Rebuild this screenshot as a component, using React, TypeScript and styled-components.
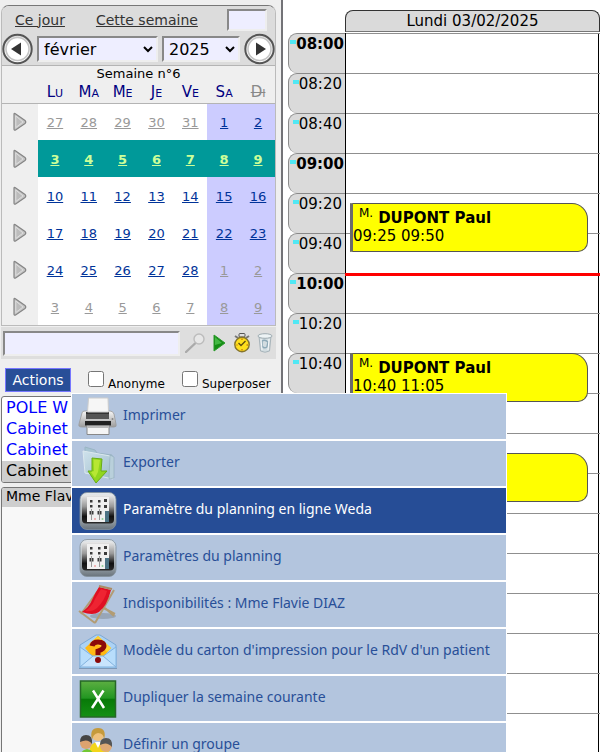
import React from "react";
import styled, { createGlobalStyle } from "styled-components";

const GlobalStyle = createGlobalStyle`
  * { box-sizing: border-box; }
  body { margin: 0; background: #fff; color: #000; font-family: "DejaVu Sans", Verdana, sans-serif; font-size: 15px; }
`;

const Page = styled.div`
  display: flex;
  height: 100vh;
  overflow: hidden;
`;

const Sidebar = styled.aside`
  flex: 0 0 283px;
  min-width: 0;
  min-height: 100%;
  padding: 5px 5px 0 1px;
  background: #efefef;
  border-right: 2px solid #737377;
`;

const CalendarBox = styled.section`
  border: 1px solid #bbb;
  border-top-color: #777;
  border-radius: 8px 8px 0 0;
  overflow: hidden;
`;

const CalendarHead = styled.header`
  background: #dcdcdc;
  border-bottom: 1px solid #b4b4b4;
`;

const QuickLinks = styled.div`
  display: flex;
  align-items: center;
  height: 27px;
  padding: 0 8px 0 13px;
`;

const QuickLink = styled.a`
  color: #333;
  font-size: 14px;
  white-space: nowrap;
  & + & { margin-left: 31px; }
`;

const field = `
  background: #eeeeff;
  border: 2px solid #eee;
  border-top-color: #888;
  border-left-color: #888;
  border-radius: 0;
  color: #000;
  font-family: inherit;
`;

const ShortInput = styled.input`
  ${field}
  width: 40px;
  height: 22px;
  margin-left: auto;
`;

const MonthBar = styled.div`
  display: flex;
  align-items: center;
  justify-content: space-between;
  height: 32px;
`;

const Picker = styled.select<{ $width: number }>`
  ${field}
  width: ${(p) => p.$width}px;
  height: 26px;
  padding: 0 3px 0 1px;
  font-size: 16px;
`;

const IconButton = styled.button`
  display: flex;
  align-items: center;
  justify-content: center;
  padding: 0;
  border: 0;
  background: none;
`;

const WeekTable = styled.table`
  width: 100%;
  table-layout: fixed;
  border-collapse: collapse;
  caption {
    height: 16px;
    font-size: 13px;
    line-height: 16px;
  }
`;

const DayName = styled.th<{ $off?: boolean }>`
  width: ${(p) => (p.$off === undefined ? "36px" : "auto")};
  height: 21px;
  padding: 0;
  border-bottom: 1px solid #b4b4b4;
  color: ${(p) => (p.$off ? "#888" : "#000080")};
  font-size: 15px;
  font-weight: normal;
  font-variant: small-caps;
  text-decoration: ${(p) => (p.$off ? "line-through" : "none")};
`;

const WeekCell = styled.td`
  height: 37px;
  padding: 0;
  background: #efefef;
  button { width: 100%; }
`;

type Tone = "other" | "current" | "selected";
const toneColor: Record<Tone, string> = { other: "#999", current: "#003399", selected: "#ccff99" };

const DayCell = styled.td<{ $weekend: boolean; $tone: Tone }>`
  padding: 0;
  text-align: center;
  background: ${(p) => (p.$tone === "selected" ? "#009999" : p.$weekend ? "#ccccff" : "#fff")};
  a {
    color: ${(p) => toneColor[p.$tone]};
    font-size: 13px;
    font-weight: ${(p) => (p.$tone === "selected" ? "bold" : "normal")};
  }
`;

const SearchBar = styled.div`
  display: flex;
  align-items: center;
  gap: 5px;
  height: 32px;
  margin-top: 1px;
  padding: 0 2px;
  background: #dedede;
`;

const SearchInput = styled.input`
  ${field}
  flex: 1;
  width: 0;
  min-width: 0;
  height: 25px;
`;

const OptionsBar = styled.div`
  display: flex;
  align-items: center;
  height: 24px;
  margin: 9px 0 4px 4px;
`;

const ActionsButton = styled.button`
  flex: none;
  width: 66px;
  height: 24px;
  padding: 0;
  border: 1px solid #7777ff;
  background: #284f98;
  color: #fff;
  font-family: inherit;
  font-size: 14px;
`;

const CheckLabel = styled.label`
  display: flex;
  align-items: flex-end;
  gap: 4px;
  margin: 2px 0 0 13px;
  font-size: 12px;
  line-height: 14px;
  white-space: nowrap;
  input {
    width: 16px;
    height: 16px;
    margin: 0 0 4px 4px;
  }
`;

const ListBox = styled.select<{ $tall?: boolean }>`
  display: block;
  width: 100%;
  height: ${(p) => (p.$tall ? "280px" : "87px")};
  margin-bottom: 4px;
  padding: ${(p) => (p.$tall ? 0 : 1)}px 0 0;
  border: 1px solid #767676;
  border-radius: 3px;
  background: ${(p) => (p.$tall ? "#f8f8f8" : "#fff")};
  font-family: inherit;
  font-size: ${(p) => (p.$tall ? 14 : 16)}px;
  overflow: hidden;
`;

const ListItem = styled.option<{ $active?: boolean; $short?: boolean }>`
  height: ${(p) => (p.$short ? 19 : 21)}px;
  min-height: 0;
  padding: 0 4px;
  line-height: ${(p) => (p.$short ? 19 : 21)}px;
  color: ${(p) => (p.$active ? "#000" : "#0000ff")};
  background: ${(p) => (p.$active ? "#cecece" : "transparent")};
`;

const Planning = styled.main`
  flex: 1;
  min-width: 0;
  padding: 10px 0 0 5px;
`;

const PlanningHead = styled.div`
  height: 22px;
  margin: 0 0 1px 57px;
  border: 1px solid #333;
  border-bottom-color: #777;
  border-radius: 8px 8px 0 0;
  background: #dadada;
  line-height: 20px;
  text-align: center;
`;

const PlanningBody = styled.div`
  display: flex;
`;

const Times = styled.div`
  flex: 0 0 57px;
`;

const TimeCell = styled.div<{ $full: boolean }>`
  display: flex;
  justify-content: flex-end;
  height: 40px;
  padding-right: ${(p) => (p.$full ? 1 : 3)}px;
  border: solid #8a8a8a;
  border-width: 1px 0 0 1px;
  border-radius: 9px 0 0 9px;
  background: #dadada;
  font-weight: ${(p) => (p.$full ? "bold" : "normal")};
  line-height: 20px;
  &::before {
    content: "";
    width: 6px;
    height: 4px;
    margin-top: 6px;
    background: #50e8f4;
  }
`;

const DayColumn = styled.div`
  position: relative;
  flex: 1;
  margin-right: 1px;
  border: solid #000;
  border-width: 0 1px;
`;

const Slot = styled.div`
  height: 40px;
  margin-right: -2px;
  border-top: 1px solid #8f8f8f;
`;

const NowLine = styled.div`
  position: absolute;
  top: 240px;
  left: -1px;
  right: -2px;
  height: 3px;
  background: #f00;
`;

const Appointment = styled.article<{ $start: number }>`
  position: absolute;
  top: ${(p) => p.$start * 2}px;
  left: 4px;
  right: 10px;
  height: 49px;
  border: 1px solid #555;
  border-left: 3px solid #6b6b6b;
  border-radius: 0 16px 10px 0;
  background: #ffff00;
  line-height: 18px;
`;

const Patient = styled.div`
  display: flex;
  gap: 5px;
  padding: 5px 0 0 6px;
  small { font-size: 12px; line-height: 8px; }
`;

const Menu = styled.nav`
  position: absolute;
  top: 393px;
  left: 71px;
  min-width: 436px;
  background: #fff;
  padding: 1px;
  display: flex;
  flex-direction: column;
  gap: 2px;
`;

const MenuItem = styled.button<{ $active?: boolean }>`
  display: flex;
  align-items: center;
  gap: 5px;
  height: 45px;
  padding: 0 6px;
  border: 0;
  background: ${(p) => (p.$active ? "#264d96" : "#b3c5de")};
  color: ${(p) => (p.$active ? "#fff" : "#284f98")};
  font-family: "Noto Sans", Verdana, sans-serif;
  font-size: 14px;
  line-height: 18px;
  text-align: left;
  white-space: nowrap;
  svg { flex: none; }
  span { padding-bottom: 4px; }
`;

const RoundArrow = ({ flip }: { flip?: boolean }) => (
  <svg width="31" height="32" viewBox="0 0 31 32">
    <defs>
      <linearGradient id="ring" x2="0" y2="1"><stop stopColor="#ddd" /><stop offset="1" stopColor="#fff" /></linearGradient>
    </defs>
    <circle cx="15.500" cy="16" r="14.200" fill="url(#ring)" stroke="#555" strokeWidth="2" />
    <circle cx="15.500" cy="16" r="11.500" fill="#fff" stroke="#c4c4c4" strokeWidth="1.500" />
    <path d={flip ? "M12 9.500L22 16L12 22.500Z" : "M19 9.500L9 16L19 22.500Z"} fill="#333" />
  </svg>
);

const WeekArrow = () => (
  <svg width="14" height="20" viewBox="0 0 14 20">
    <path d="M2 1.5Q1 1 1 2.5V17Q1 18.7 2.6 18L12 11.5Q13.5 10 12 8.5Z" fill="#c6c6c6" stroke="#858585" strokeWidth="1.2" />
    <path d="M2.8 4V15.5L10 10Z" fill="#bcbcbc" stroke="#dedede" />
  </svg>
);

const Magnifier = () => (
  <svg width="20" height="20" viewBox="0 0 20 20">
    <path d="M1 19L10 10.500" stroke="#aaa" strokeWidth="2.400" strokeLinecap="round" />
    <circle cx="14" cy="6" r="5" fill="#e7e7e7" stroke="#bcbcbc" strokeWidth="1.400" />
  </svg>
);

const Play = () => (
  <svg width="18" height="20" viewBox="0 0 18 20">
    <path d="M4 2L15 10L4 18Z" fill="#148d14" stroke="#2b9a2b" />
    <path d="M5 4L12 10L5 12Z" fill="#44b844" />
  </svg>
);

const Stopwatch = () => (
  <svg width="18" height="20" viewBox="0 0 18 20">
    <rect x="6" y="0.500" width="6" height="3.500" rx="1" fill="#ddd" stroke="#555" />
    <path d="M2 3L5 5M16 3L13 5" stroke="#777" strokeWidth="2" />
    <circle cx="9" cy="11.500" r="7.200" fill="#ffdf1b" stroke="#85742c" strokeWidth="1.400" />
    <path d="M5.500 10L8 12.500L12.500 8" fill="none" stroke="#5b4a10" strokeWidth="1.300" />
    <path d="M9 5.500V7M9 16V17.500M3.500 12H4.500M13.500 12H15" stroke="#b05010" />
  </svg>
);

const Trash = () => (
  <svg width="18" height="20" viewBox="0 0 18 20">
    <path d="M3 3L4.500 18Q9 20.500 13.500 18L15 3Z" fill="#d3dde1" stroke="#a8b4ba" />
    <ellipse cx="9" cy="3" rx="7" ry="2.300" fill="#edf3f5" stroke="#9eabb1" />
    <path d="M6 8Q9 6 12 9L11 14Q8 16 6 13Z" fill="none" stroke="#8eaab8" strokeWidth="1.500" />
    <path d="M5 6L6 17M13 6L12 17" stroke="#f7fafb" />
  </svg>
);

const Printer = () => (
  <svg width="40" height="40" viewBox="0 0 40 40">
    <defs><linearGradient id="prn" x2="0" y2="1"><stop stopColor="#f7f7f7" /><stop offset="1" stopColor="#9c9c9c" /></linearGradient></defs>
    <path d="M4 16Q4 14 7 14H32Q35 14 36 17L38 27Q39 30 36 30H4Q0 30 1 27Z" fill="url(#prn)" stroke="#999" strokeWidth=".8" />
    <path d="M8 15H31V22H8Z" fill="#555" />
    <path d="M8 15H31V17H8Z" fill="#333" />
    <path d="M10.500 1H30L30.500 15H9.500Z" fill="#f6f6f6" stroke="#ccc" />
    <path d="M7 24H33V28.500H7Z" fill="#222" />
    <path d="M9 28.500H31V37.500H9Z" fill="#f5f5f5" stroke="#888" />
    <path d="M9 30H31" stroke="#bbb" strokeWidth="2" />
    <circle cx="34.500" cy="22" r="1" fill="#888" />
  </svg>
);

const ExportFolder = () => (
  <svg width="40" height="40" viewBox="0 0 40 40">
    <defs><linearGradient id="fld" x2="1" y2="1"><stop stopColor="#cfe2ec" /><stop offset="1" stopColor="#9dbccb" /></linearGradient></defs>
    <path d="M7 3L17 6L19 9L34 11V34L7 27Z" fill="#a6c3d2" stroke="#9ab5c4" />
    <path d="M5 7L32 12L35 35L7 29Z" fill="url(#fld)" stroke="#dbe8ee" />
    <path d="M32 11L36 13V34L31 35Z" fill="#b9d0db" stroke="#8faab8" strokeWidth=".6" />
    <path d="M14 14L24 15L23 27L29 27L18 39L10 27L14 27Z" fill="#90d61e" stroke="#68ac15" />
    <path d="M15.500 15.500L22 16L20 28L17 34L13 28L16 27Z" fill="#b7e733" />
  </svg>
);

const Mixer = () => (
  <svg width="40" height="40" viewBox="0 0 40 40">
    <defs>
      <linearGradient id="mixFrame" x2="0" y2="1"><stop stopColor="#e6eaed" /><stop offset=".8" stopColor="#8d979e" /><stop offset="1" stopColor="#69737b" /></linearGradient>
      <linearGradient id="mixFace" x2="0" y2="1"><stop stopColor="#e8e8e8" /><stop offset=".4" stopColor="#999" /><stop offset=".75" stopColor="#111" /><stop offset="1" stopColor="#2a2a2a" /></linearGradient>
    </defs>
    <rect x="2" y="1.500" width="36" height="37" rx="7" fill="url(#mixFrame)" stroke="#84909a" strokeWidth=".8" />
    <rect x="4" y="4" width="32" height="28.500" rx="4" fill="url(#mixFace)" />
    <rect x="9" y="6" width="22" height="25" fill="#f0f0f0" />
    <path d="M27 20H31V31H27Z" fill="#4c7384" />
    <g fill="#3a3a3a">
      <path d="M12 9H14.500V11.500H12ZM12 14H14.500V16.500H12ZM20 9H22.500V11.500H20ZM20 14H22.500V16.500H20ZM26 8H29V11H26ZM26 14H29V17H26Z" />
      <path d="M11.500 20H15.500V23.500H11.500ZM19.500 20H23.500V23.500H19.500Z" />
    </g>
    <path d="M13.500 18V29M21.500 18V29" stroke="#999" />
    <circle cx="17" cy="28" r="1" fill="#f0a0a0" /><circle cx="24.500" cy="28" r="1" fill="#90d098" />
  </svg>
);

const DeckChair = () => (
  <svg width="40" height="40" viewBox="0 0 40 40">
    <ellipse cx="25" cy="31" rx="13" ry="3" fill="#98a6b8" />
    <path d="M22 3L3 29M36 5L17 38M14 17L37 29M27 23L36 31M1 26L17 38" fill="none" stroke="#b29c74" strokeWidth="2" />
    <path d="M21 2L33 5Q29 21 21 27Q15 31 4 27Q11 22 14 15Q17 8 21 2Z" fill="#e00f22" />
    <path d="M23 4L29 6Q27 15 19 23Q14 27 7 26Q14 22 17 14Z" fill="#ee2432" />
    <path d="M21 1L34 4" stroke="#aa8c63" strokeWidth="2" />
  </svg>
);

const Envelope = () => (
  <svg width="40" height="40" viewBox="0 0 40 40">
    <path d="M2 13L18 3H22L38 13V36H2Z" fill="#acd2f4" stroke="#7ca8d5" />
    <path d="M20 4L33 16L20 31L7 16Z" fill="#ffb914" />
    <path d="M20 4L33 16L29 20Q22 11 11 12Z" fill="#ffd332" />
    <path d="M2 15L16 25H24L38 15V36H2Z" fill="#b8ddfb" stroke="#83b3df" />
    <path d="M2 35L15 24H25L38 35Z" fill="#c8e4fd" stroke="#83b3df" />
    <path d="M1 36.500H39" stroke="#7f99b8" />
    <path d="M14 14Q15 10 20 10Q26 10 26 14Q26 17 20 19V23" fill="none" stroke="#8b0909" strokeWidth="5" />
    <circle cx="20" cy="28" r="3" fill="#8b0909" />
  </svg>
);

const Sheet = () => (
  <svg width="40" height="40" viewBox="0 0 40 40">
    <defs><linearGradient id="xls" x2="0" y2="1"><stop stopColor="#5daf42" /><stop offset=".48" stopColor="#219621" /><stop offset=".5" stopColor="#087908" /><stop offset="1" stopColor="#149014" /></linearGradient></defs>
    <rect x="2.500" y="2" width="35" height="36" fill="url(#xls)" stroke="#266727" strokeWidth="1.500" />
    <path d="M15 11.500L26 29M25.500 11.500L14 29" stroke="#fff" strokeWidth="2.500" />
  </svg>
);

const Group = () => (
  <svg width="40" height="40" viewBox="0 0 40 40">
    <path d="M11 27Q12 16 20 16Q30 16 31 27Z" fill="#f3d51a" />
    <path d="M17 16L20 22L23 16Z" fill="#fff" />
    <circle cx="20" cy="9" r="6" fill="#efc17d" /><path d="M14 14Q11 2 20 2Q29 2 26 14Q26 7 20 7Q15 8 14 14Z" fill="#c59a3c" />
    <path d="M1 36Q1 24 9 23Q17 24 18 36Z" fill="#72c832" />
    <circle cx="8" cy="17" r="6" fill="#dda36f" /><path d="M2 16Q2 9 8 9Q15 9 14 18Q10 12 2 16Z" fill="#454545" />
    <path d="M19 37Q19 27 28 26Q37 27 37 37Z" fill="#e6b81d" />
    <circle cx="28" cy="20" r="6" fill="#dfaa76" /><path d="M22 19Q22 12 28 12Q35 12 34 21Q29 15 22 19Z" fill="#555" />
  </svg>
);

const weeks = [
  [27, 28, 29, 30, 31, 1, 2],
  [3, 4, 5, 6, 7, 8, 9],
  [10, 11, 12, 13, 14, 15, 16],
  [17, 18, 19, 20, 21, 22, 23],
  [24, 25, 26, 27, 28, 1, 2],
  [3, 4, 5, 6, 7, 8, 9],
];
const dayNames = ["Lu", "Ma", "Me", "Je", "Ve", "Sa", "Di"];

const tone = (row: number, day: number): Tone => {
  if (row === 1) return "selected";
  if (row === 5 || (row === 0 && day > 20) || (row === 4 && day < 20)) return "other";
  return "current";
};

const slots = Array.from({ length: 18 }, (_, i) => {
  const minutes = 480 + i * 20;
  return `${String(Math.floor(minutes / 60)).padStart(2, "0")}:${String(minutes % 60).padStart(2, "0")}`;
});

const appointments = [
  { start: 85, time: "09:25 09:50" },
  { start: 160, time: "10:40 11:05" },
  { start: 210, time: "11:30 11:55" },
];

const actions = [
  { label: "Imprimer", Icon: Printer },
  { label: "Exporter", Icon: ExportFolder },
  { label: "Paramètre du planning en ligne Weda", Icon: Mixer, active: true },
  { label: "Paramètres du planning", Icon: Mixer },
  { label: "Indisponibilités : Mme Flavie DIAZ", Icon: DeckChair },
  { label: "Modèle du carton d'impression pour le RdV d'un patient", Icon: Envelope },
  { label: "Dupliquer la semaine courante", Icon: Sheet },
  { label: "Définir un groupe", Icon: Group },
];

export default function App() {
  return (
    <Page>
      <GlobalStyle />
      <Sidebar>
        <CalendarBox>
          <CalendarHead>
            <QuickLinks>
              <QuickLink href="#jour">Ce jour</QuickLink>
              <QuickLink href="#semaine">Cette semaine</QuickLink>
              <ShortInput aria-label="Décalage" />
            </QuickLinks>
            <MonthBar>
              <IconButton aria-label="Mois précédent"><RoundArrow /></IconButton>
              <Picker $width={121} aria-label="Mois"><option>février</option></Picker>
              <Picker $width={78} aria-label="Année"><option>2025</option></Picker>
              <IconButton aria-label="Mois suivant"><RoundArrow flip /></IconButton>
            </MonthBar>
          </CalendarHead>
          <WeekTable>
            <caption>Semaine n°6</caption>
            <thead>
              <tr>
                <DayName />
                {dayNames.map((name) => <DayName key={name} $off={name === "Di"}>{name}</DayName>)}
              </tr>
            </thead>
            <tbody>
              {weeks.map((days, row) => (
                <tr key={row}>
                  <WeekCell><IconButton aria-label="Voir la semaine"><WeekArrow /></IconButton></WeekCell>
                  {days.map((day, col) => (
                    <DayCell key={col} $weekend={col > 4} $tone={tone(row, day)}><a href="#date">{day}</a></DayCell>
                  ))}
                </tr>
              ))}
            </tbody>
          </WeekTable>
        </CalendarBox>
        <SearchBar>
          <SearchInput aria-label="Rechercher un patient" />
          <IconButton aria-label="Rechercher"><Magnifier /></IconButton>
          <IconButton aria-label="Suivant"><Play /></IconButton>
          <IconButton aria-label="Historique"><Stopwatch /></IconButton>
          <IconButton aria-label="Effacer"><Trash /></IconButton>
        </SearchBar>
        <OptionsBar>
          <ActionsButton>Actions</ActionsButton>
          <CheckLabel><input type="checkbox" />Anonyme</CheckLabel>
          <CheckLabel><input type="checkbox" />Superposer</CheckLabel>
        </OptionsBar>
        <ListBox size={4} aria-label="Cabinets">
          <ListItem>POLE W</ListItem>
          <ListItem>Cabinet</ListItem>
          <ListItem>Cabinet</ListItem>
          <ListItem $active>Cabinet</ListItem>
        </ListBox>
        <ListBox size={8} $tall aria-label="Praticiens">
          <ListItem $active $short>Mme Flavie DIAZ</ListItem>
        </ListBox>
      </Sidebar>
      <Planning>
        <PlanningHead>Lundi 03/02/2025</PlanningHead>
        <PlanningBody>
          <Times>{slots.map((t) => <TimeCell key={t} $full={t.endsWith("00")}>{t}</TimeCell>)}</Times>
          <DayColumn>
            {slots.map((t) => <Slot key={t} />)}
            {appointments.map((a) => (
              <Appointment key={a.start} $start={a.start}>
                <Patient><small>M.</small><strong>DUPONT Paul</strong></Patient>
                {a.time}
              </Appointment>
            ))}
            <NowLine />
          </DayColumn>
        </PlanningBody>
      </Planning>
      <Menu aria-label="Actions">
        {actions.map(({ label, Icon, active }) => (
          <MenuItem key={label} $active={active}><Icon /><span>{label}</span></MenuItem>
        ))}
      </Menu>
    </Page>
  );
}
